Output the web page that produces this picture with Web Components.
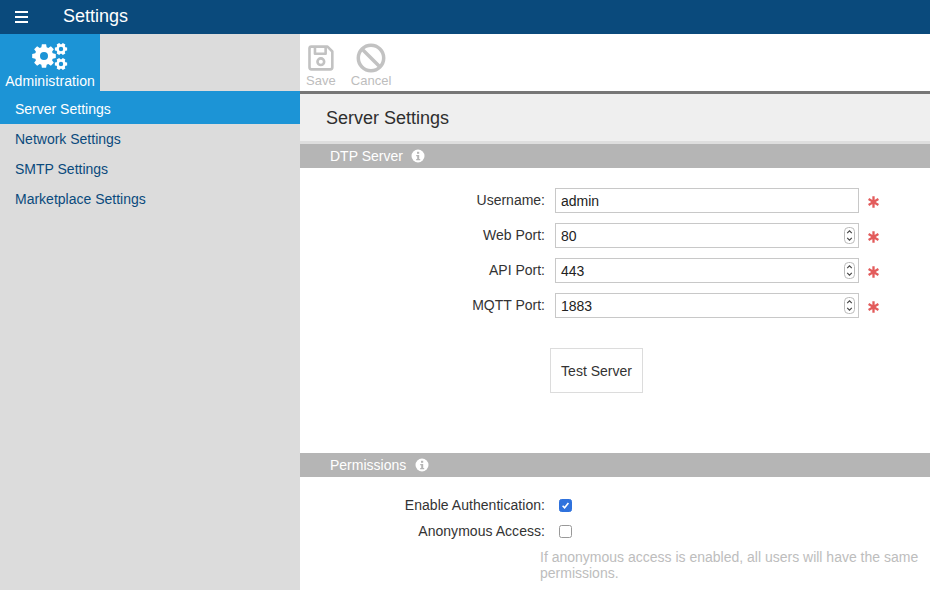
<!DOCTYPE html>
<html><head><meta charset="utf-8"><style>
html,body{margin:0;padding:0;height:100%;overflow:hidden;font-family:"Liberation Sans",Arial,sans-serif}
</style></head><body>
<app-shell></app-shell>
<script>
const INFO='<svg width="14" height="14" viewBox="0 0 14 14"><circle cx="7" cy="7" r="6.5" fill="#fff"/><rect x="6" y="2.8" width="2.2" height="2" fill="#b5b5b5"/><path d="M5.2 6h3v4h1v1.2H5.2V10h1V7.2h-1z" fill="#b5b5b5"/></svg>';
function gear(cx,cy,R,h,teeth){
 let d='';
 for(let i=0;i<teeth;i++){
  const a=i*2*Math.PI/teeth, w=Math.PI/teeth*0.6;
  const p=[[R*0.76,a-w*1.25],[R,a-w*0.75],[R,a+w*0.75],[R*0.76,a+w*1.25]];
  d+=p.map((q,j)=>(i==0&&j==0?'M':'L')+(cx+q[0]*Math.cos(q[1])).toFixed(2)+' '+(cy+q[0]*Math.sin(q[1])).toFixed(2)).join(' ')+' ';
 }
 d+='Z M'+(cx+h)+' '+cy+' a'+h+' '+h+' 0 1 0 '+(-2*h)+' 0 a'+h+' '+h+' 0 1 0 '+(2*h)+' 0 Z';
 return d;
}
const GEARS='<svg width="36" height="30" viewBox="0 0 36 30"><path fill="#fff" fill-rule="evenodd" d="'+gear(12,14,12,4,8)+gear(29,7,6.3,2.2,6)+gear(29,22,6.3,2.2,6)+'"/></svg>';

function def(name,css,html){
 customElements.define(name,class extends HTMLElement{
  constructor(){super();const s=this.attachShadow({mode:'open'});
   s.innerHTML='<style>'+css+'</style>'+(typeof html==='function'?html(this):html);}
 });
}
def('top-bar',`:host{display:flex;align-items:center;height:34px;background:#0a4a7c;color:#fff}
 .b{width:63px;display:flex;padding-left:15px;box-sizing:border-box}
 .t{font-size:18px;line-height:32px;padding-bottom:2px}`,
 `<div class="b"><svg width="13" height="12" viewBox="0 0 13 12"><path fill="#fff" d="M0 0h13v2H0zM0 5h13v2H0zM0 10h13v2H0z"/></svg></div><div class="t"><slot></slot></div>`);
def('side-tab',`:host{display:block;height:57px;background:#dcdcdc}
 .t{width:100px;height:57px;background:#1c94d6;color:#fff;display:flex;flex-direction:column;align-items:center;font-size:14px;box-sizing:border-box;padding-top:8px}
 svg{display:block;height:30px}.l{line-height:16px;margin-top:.5px;letter-spacing:.07px}`,
 ()=>`<div class="t">${GEARS}<div class="l"><slot></slot></div></div>`);
def('side-item',`:host{display:block;height:30px;line-height:30px;padding-left:15px;font-size:14px;color:#0a4a7c}
 :host([active]){background:#1c94d6;color:#fff;height:33px;line-height:36px}`,`<slot></slot>`);
def('side-bar',`:host{display:block;width:300px;flex:none;background:#dcdcdc}`,`<slot></slot>`);
def('tool-btn',`:host{display:flex;flex-direction:column;align-items:center;font-size:13px;color:#bdbdbd;line-height:16px;letter-spacing:.04px}
 .i{height:31px;display:flex;align-items:center;justify-content:center;margin-bottom:0}`,
 `<div class="i"><slot name="icon"></slot></div><slot></slot>`);
def('tool-bar',`:host{display:flex;height:57px;box-sizing:border-box;padding:8px 0 0 6px;gap:15px;background:#fff}`,`<slot></slot>`);
def('page-title',`:host{display:block;border-top:3px solid #767676;border-bottom:3px solid #dedede;height:53px;box-sizing:border-box;background:#efefef;padding-left:26px;line-height:49px;font-size:18px;color:#2e2e2e}`,`<slot></slot>`);
def('section-bar',`:host{display:flex;align-items:center;gap:8.5px;height:24px;background:#b5b5b5;color:#fff;padding-left:30px;font-size:14px}
 .i{display:flex}`,`<slot></slot><span class="i">${INFO}</span>`);
def('form-row',`:host{display:grid;grid-template-columns:245px 304px 1fr;align-items:center;height:25px;margin-bottom:10px;font-size:14px;color:#333}
 .l{text-align:right;margin-top:-1px}
 .f{box-sizing:border-box;height:25px;width:304px;margin-left:10px;border:1px solid #c8c8c8;background:#fff;padding-left:5px;line-height:24px;color:#222;position:relative;font-size:14px}
 .star{margin-left:18.5px;}
 .sp{position:absolute;right:3px;top:3px;width:11px;height:17px}
 svg{display:block}`,
 h=>`<div class="l">${h.getAttribute('label')}</div><div class="f">${h.getAttribute('value')}${h.hasAttribute('spin')?'<svg class="sp" viewBox="0 0 11 17"><rect x=".5" y=".5" width="10" height="16" rx="4" fill="#fff" stroke="#bbb"/><path d="M3.2 6.2 5.5 3.8l2.3 2.4M3.2 10.8l2.3 2.4 2.3-2.4" fill="none" stroke="#444" stroke-width="1.1"/></svg>':''}</div><svg class="star" width="11" height="12" viewBox="0 0 11 12" style="margin-top:3px"><path d="M5.5 .3v11.4M.6 3.1l9.8 5.8M.6 8.9l9.8-5.8" stroke="#e35c5c" stroke-width="2.3" fill="none"/></svg>`);
def('test-button',`:host{display:flex;align-items:center;justify-content:center;width:93px;height:45px;box-sizing:border-box;border:1px solid #dcdcdc;background:#fff;font-size:14px;color:#333}`,`<slot></slot>`);
def('check-row',`:host{display:grid;grid-template-columns:245px 1fr;align-items:center;height:26px;font-size:14px;color:#333}
 .l{text-align:right;letter-spacing:.04px}
 .c{margin-left:14px;width:11px;height:11px;border-radius:2.5px;border:1px solid #999;background:#fff;display:flex}
 :host([checked]) .c{background:#2f72dd;border-color:#2f72dd}`,
 h=>`<div class="l">${h.getAttribute('label')}</div><div class="c">${h.hasAttribute('checked')?'<svg width="11" height="11" viewBox="0 0 11 11"><path d="M2.6 5.7 4.6 7.8 8.4 3" fill="none" stroke="#fff" stroke-width="1.6"/></svg>':''}</div>`);
def('help-text',`:host{display:block;margin:5px 0 0 240px;width:390px;font-size:14px;line-height:16px;color:#bdbdbd}`,`<slot></slot>`);
def('main-pane',`:host{display:block;flex:1;min-width:0;background:#fff;overflow:hidden}
 .f1{padding-top:20px;height:285px;box-sizing:border-box}
 .btn{margin:30px 0 0 250px;}
 .f2{padding-top:15px}`,
 `<slot name="tools"></slot><slot name="title"></slot><slot name="s1"></slot><div class="f1"><slot name="r1"></slot><div class="btn"><slot name="btn"></slot></div></div><slot name="s2"></slot><div class="f2"><slot name="r2"></slot></div>`);
def('app-shell',`:host{display:flex;flex-direction:column;height:590px;width:930px}
 .b{display:flex;flex:1;min-height:0}`,
 `<top-bar>Settings</top-bar><div class="b"><side-bar><side-tab>Administration</side-tab><side-item active>Server Settings</side-item><side-item>Network Settings</side-item><side-item>SMTP Settings</side-item><side-item>Marketplace Settings</side-item></side-bar>
 <main-pane>
  <tool-bar slot="tools">
   <tool-btn><svg slot="icon" width="26" height="26" viewBox="0 0 28 28" fill="none" stroke="#c2c2c2" stroke-width="2.8" stroke-linejoin="round"><path d="M3.5 1.8h17.5l5.2 5.2v17a2.2 2.2 0 0 1-2.2 2.2H3.8a2.2 2.2 0 0 1-2.2-2.2V3.7a2 2 0 0 1 1.9-1.9z"/><path d="M7.5 2v7.5h11.5V2"/><circle cx="13.8" cy="18" r="3.6"/></svg>Save</tool-btn>
   <tool-btn><svg slot="icon" width="30" height="30" viewBox="0 0 30 30" fill="none" stroke="#c2c2c2" stroke-width="3.5"><circle cx="15" cy="15" r="12.7"/><path d="M6.2 6.2 23.8 23.8"/></svg>Cancel</tool-btn>
  </tool-bar>
  <page-title slot="title">Server Settings</page-title>
  <section-bar slot="s1">DTP Server</section-bar>
  <form-row slot="r1" label="Username:" value="admin"></form-row>
  <form-row slot="r1" label="Web Port:" value="80" spin></form-row>
  <form-row slot="r1" label="API Port:" value="443" spin></form-row>
  <form-row slot="r1" label="MQTT Port:" value="1883" spin></form-row>
  <test-button slot="btn">Test Server</test-button>
  <section-bar slot="s2">Permissions</section-bar>
  <check-row slot="r2" label="Enable Authentication:" checked></check-row>
  <check-row slot="r2" label="Anonymous Access:"></check-row>
  <help-text slot="r2">If anonymous access is enabled, all users will have the same permissions.</help-text>
 </main-pane></div>`);
</script></body></html>
